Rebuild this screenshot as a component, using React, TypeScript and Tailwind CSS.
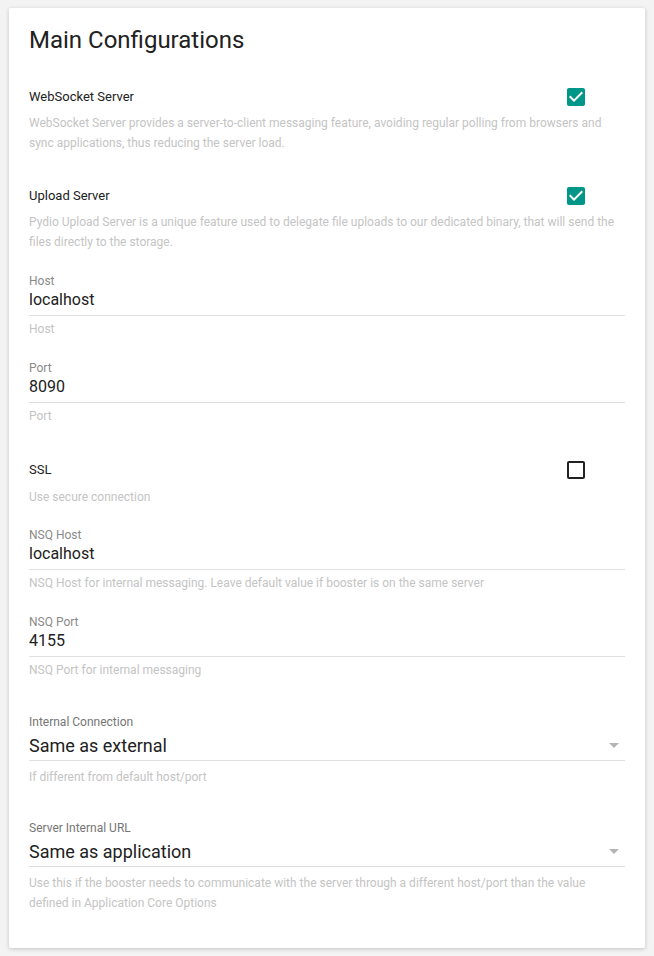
import React from "react";

const font = { fontFamily: "Roboto, 'Noto Sans', sans-serif" };

function CheckRow({ label, checked }: { label: string; checked: boolean }) {
  return (
    <div className="flex h-[24px] items-center justify-between pr-[37px]">
      <span className="text-[13px] text-[#212121]">{label}</span>
      {checked ? (
        <svg width="24" height="24" viewBox="0 0 24 24">
          <path
            d="M19 3H5c-1.11 0-2 .9-2 2v14c0 1.1.89 2 2 2h14c1.11 0 2-.9 2-2V5c0-1.1-.89-2-2-2zm-9 14l-5-5 1.41-1.41L10 14.17l7.59-7.59L19 8l-9 9z"
            fill="#009688"
          />
        </svg>
      ) : (
        <svg width="24" height="24" viewBox="0 0 24 24">
          <path
            d="M19 5v14H5V5h14m0-2H5c-1.1 0-2 .9-2 2v14c0 1.1.9 2 2 2h14c1.1 0 2-.9 2-2V5c0-1.1-.9-2-2-2z"
            fill="#212121"
          />
        </svg>
      )}
    </div>
  );
}

function Desc({ children, className = "" }: { children: React.ReactNode; className?: string }) {
  return <div className={`text-[12px] leading-[20px] text-[#c4c4c4] ${className}`}>{children}</div>;
}

function TextField({ label, value, desc, className = "" }: { label: string; value: string; desc: string; className?: string }) {
  return (
    <div className={className}>
      <div className="h-[16px] text-[12px] leading-[16px] text-[#8a8a8a]">{label}</div>
      <div className="h-[24px] text-[16px] leading-[22px] text-[#212121]">{value}</div>
      <div className="mt-[2px] h-px bg-[#e0e0e0]" />
      <Desc className="mt-[3px]">{desc}</Desc>
    </div>
  );
}

function SelectField({ label, value, desc, className = "" }: { label: string; value: string; desc: React.ReactNode; className?: string }) {
  return (
    <div className={className}>
      <div className="h-[16px] text-[12px] leading-[16px] text-[#757575]">{label}</div>
      <div className="flex h-[30px] items-center justify-between">
        <span className="text-[18px] text-[#212121]">{value}</span>
        <svg width="24" height="24" viewBox="0 0 24 24" className="mr-[-1px]">
          <path d="M7 10l5 5 5-5z" fill="#b5b5b5" />
        </svg>
      </div>
      <div className="h-px bg-[#e0e0e0]" />
      <Desc className="mt-[6px]">{desc}</Desc>
    </div>
  );
}

export default function App() {
  return (
    <div className="min-h-[956px] bg-[#f3f3f3] pl-[9px] pr-[9px] pt-[8px] pb-[8px]" style={font}>
      <div className="rounded-[2px] bg-white px-[20px] pt-[16px] pb-[35px] shadow-[0_1px_4px_rgba(0,0,0,0.2)]">
        <div className="h-[32px] text-[24px] leading-[32px] text-[#212121]">Main Configurations</div>

        <div className="mt-[29px]">
          <CheckRow label="WebSocket Server" checked />
          <Desc className="mt-[4px]">
            WebSocket Server provides a server-to-client messaging feature, avoiding regular polling from browsers and sync applications, thus reducing the server load.
          </Desc>
        </div>

        <div className="mt-[31px]">
          <CheckRow label="Upload Server" checked />
          <Desc className="mt-[4px]">
            Pydio Upload Server is a unique feature used to delegate file uploads to our dedicated binary, that will send the files directly to the storage.
          </Desc>
        </div>

        <TextField className="mt-[21px]" label="Host" value="localhost" desc="Host" />
        <TextField className="mt-[21px]" label="Port" value="8090" desc="Port" />

        <div className="mt-[32px]">
          <CheckRow label="SSL" checked={false} />
          <Desc className="mt-[5px]">Use secure connection</Desc>
        </div>

        <TextField
          className="mt-[20px]"
          label="NSQ Host"
          value="localhost"
          desc="NSQ Host for internal messaging. Leave default value if booster is on the same server"
        />
        <TextField className="mt-[21px]" label="NSQ Port" value="4155" desc="NSQ Port for internal messaging" />

        <SelectField
          className="mt-[34px]"
          label="Internal Connection"
          value="Same as external"
          desc="If different from default host/port"
        />
        <SelectField
          className="mt-[33px]"
          label="Server Internal URL"
          value="Same as application"
          desc="Use this if the booster needs to communicate with the server through a different host/port than the value defined in Application Core Options"
        />
      </div>
    </div>
  );
}
